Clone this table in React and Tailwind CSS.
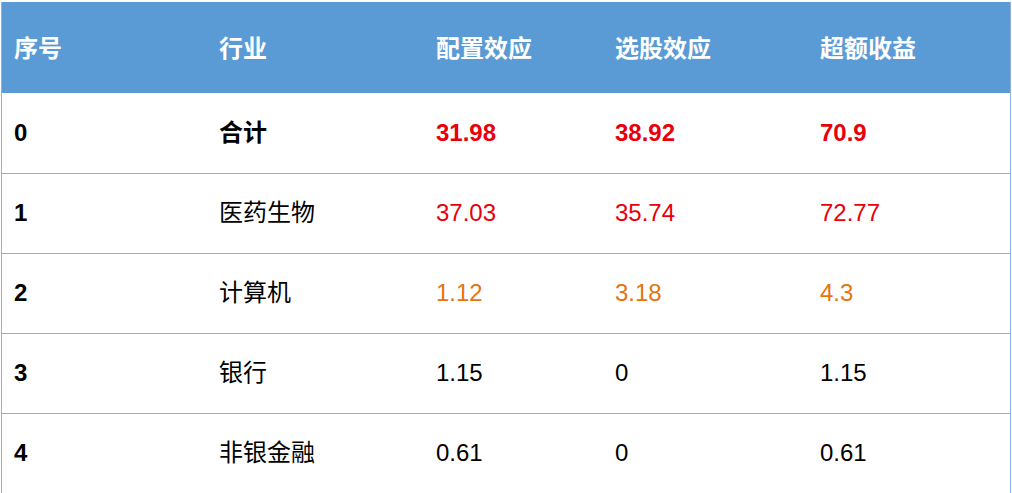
import React from 'react';

const rows = [
  { id: '0', name: '合计', a: '31.98', b: '38.92', c: '70.9', tone: 'total' },
  { id: '1', name: '医药生物', a: '37.03', b: '35.74', c: '72.77', tone: 'red' },
  { id: '2', name: '计算机', a: '1.12', b: '3.18', c: '4.3', tone: 'orange' },
  { id: '3', name: '银行', a: '1.15', b: '0', c: '1.15', tone: 'plain' },
  { id: '4', name: '非银金融', a: '0.61', b: '0', c: '0.61', tone: 'plain' },
];

const toneClass = {
  total: 'text-[#e8000b] font-bold',
  red: 'text-[#e8000b]',
  orange: 'text-[#e5740f]',
  plain: 'text-black',
};

export default function App() {
  return (
    <div className="w-[1012px] h-[493px] bg-white pt-[2px] pl-[1px] overflow-hidden font-['Liberation_Sans','Noto_Sans_CJK_SC',sans-serif]">
      <div className="w-[1010px] border-x border-[#8fb0dc]">
        <table className="table-fixed border-collapse w-full text-[24px]">
          <colgroup>
            <col className="w-[204px]" />
            <col className="w-[217px]" />
            <col className="w-[179px]" />
            <col className="w-[205px]" />
            <col className="w-[203px]" />
          </colgroup>
          <thead>
            <tr className="bg-[#5b9bd5] text-white h-[91px]">
              <th className="text-left font-bold pl-[12px] pt-[2px]">序号</th>
              <th className="text-left font-bold pl-[13px] pt-[2px]">行业</th>
              <th className="text-left font-bold pl-[13px] pt-[2px]">配置效应</th>
              <th className="text-left font-bold pl-[13px] pt-[2px]">选股效应</th>
              <th className="text-left font-bold pl-[13px] pt-[2px]">超额收益</th>
            </tr>
          </thead>
          <tbody>
            {rows.map((r) => (
              <tr key={r.id} className="h-[80px] border-b border-[#8fb0dc]">
                <td className="pl-[12px] font-bold text-black">{r.id}</td>
                <td className={`pl-[13px] text-black ${r.tone === 'total' ? 'font-bold' : ''}`}>{r.name}</td>
                <td className={`pl-[13px] ${toneClass[r.tone]}`}>{r.a}</td>
                <td className={`pl-[13px] ${toneClass[r.tone]}`}>{r.b}</td>
                <td className={`pl-[13px] ${toneClass[r.tone]}`}>{r.c}</td>
              </tr>
            ))}
          </tbody>
        </table>
      </div>
    </div>
  );
}
